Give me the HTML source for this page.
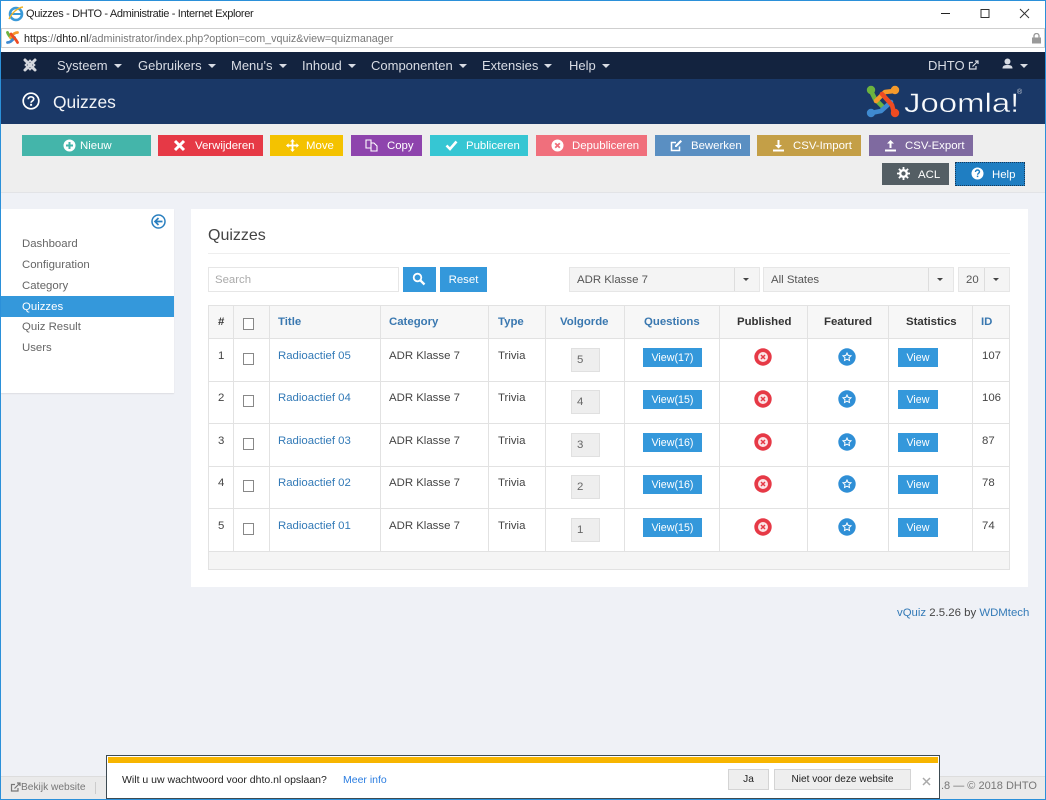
<!DOCTYPE html>
<html><head><meta charset="utf-8"><title>Quizzes - DHTO</title>
<style>
html,body{margin:0;padding:0;width:1046px;height:800px;overflow:hidden;background:#eff1f6;font-family:"Liberation Sans",sans-serif;font-size:11.4px;color:#444}
.a{position:absolute;white-space:nowrap}
.b{position:absolute;box-sizing:border-box;color:#fff;display:block}
.b span{position:absolute;top:1px;white-space:nowrap}
.b svg{position:absolute}
.n{position:absolute;top:52px;line-height:27px;font-size:13px;color:#d8dce4;white-space:nowrap}
.n i{display:inline-block;width:0;height:0;border:4px solid transparent;border-top-color:#d8dce4;border-bottom:0;margin-left:6px;vertical-align:2px}
.h{position:absolute;top:306px;height:33px;line-height:33px;font-weight:bold;color:#3a78b0;white-space:nowrap}
.d{position:absolute;line-height:14px;white-space:nowrap;color:#444}
.l{color:#337ab7}
.v{position:absolute;width:1px;background:#e2e2e2;top:305px;height:246px}
.r{position:absolute;left:208px;width:802px;height:1px;background:#e2e2e2}
.cb{position:absolute;left:243px;width:9px;height:10px;border:1px solid #888;background:#fff}
.ord{position:absolute;left:571px;width:29px;height:24px;box-sizing:border-box;background:#eee;border:1px solid #e0e0e0;line-height:22px;padding-left:5px;color:#666}
.bt{position:absolute;height:19px;line-height:20px;background:#3498db;color:#fff;text-align:center;font-size:10.7px}
.sel{position:absolute;top:267px;height:25px;box-sizing:border-box;background:#f4f4f4;border:1px solid #e6e6e6;line-height:25px;padding-left:7px;color:#555}
.sel b{position:absolute;right:0;top:0;width:24px;height:23px;border-left:1px solid #ddd}
.sel b:after{content:"";position:absolute;left:8px;top:10px;border:3.5px solid transparent;border-top-color:#444;border-bottom:0}
.m{position:absolute;left:22px;color:#666;line-height:21px;margin-top:1px}
</style></head><body>

<!-- window frame -->
<div class="a" style="left:0;top:0;width:1046px;height:28px;background:#fff"></div>
<div class="a" style="left:1px;top:28px;width:1044px;height:20px;box-sizing:border-box;background:#fff;border:1px solid #cfcfcf"></div>
<div class="a" style="left:0;top:48px;width:1046px;height:4px;background:#fff"></div>
<svg class="a" style="left:7px;top:5px" width="18" height="17" viewBox="0 0 18 17"><ellipse cx="9" cy="9" rx="6" ry="6" fill="none" stroke="#3a9ad9" stroke-width="2.600"/><path d="M4 9h10" stroke="#3a9ad9" stroke-width="2"/><path d="M2 14C5 8 10 3 16 2" stroke="#f0b429" stroke-width="1.400" fill="none"/></svg>
<div class="a" style="left:26px;top:7px;font-size:11px;line-height:14px;color:#222;letter-spacing:-.34px">Quizzes - DHTO - Administratie - Internet Explorer</div>
<svg class="a" style="left:940px;top:6px" width="100" height="16" viewBox="0 0 100 16"><path d="M1 7.500h9" stroke="#222" stroke-width="1"/><rect x="41" y="3.500" width="8" height="8" fill="none" stroke="#333"/><path d="M80 3l9 9M89 3l-9 9" stroke="#333" stroke-width="1" fill="none"/></svg>
<svg class="a" style="left:5px;top:30px" width="15" height="15" viewBox="0 0 15 15"><g fill="none" stroke-width="2.800" stroke-linecap="round"><path d="M2.500 2.500c1 3 3 5 5 7" stroke="#6cb33f"/><path d="M12.500 2.500c-3 0-5 2-7 5" stroke="#f59a2b"/><path d="M2.500 12.500c3 0 5-2 7-5" stroke="#3f8ad0"/><path d="M6 4c2 3 5 5 6.500 8.500" stroke="#ee4b22"/></g></svg>
<div class="a" style="left:24px;top:32px;font-size:10.750px;line-height:14px;color:#777"><span style="color:#222">https</span>://<span style="color:#222">dhto.nl</span>/administrator/index.php?option=com_vquiz&amp;view=quizmanager</div>
<svg class="a" style="left:1031px;top:33px" width="11" height="11" viewBox="0 0 11 11"><rect x="1" y="4.500" width="9" height="6" fill="#999"/><path d="M3 5V3a2.500 2.500 0 015 0v2" fill="none" stroke="#999" stroke-width="1.300"/></svg>

<!-- navbar -->
<div class="a" style="left:1px;top:52px;width:1044px;height:27px;background:#13233f"></div>
<svg class="a" style="left:22px;top:57px" width="16" height="16" viewBox="0 0 16 16"><g fill="none" stroke="#d4d7dd" stroke-linecap="round"><path d="M3 3l10 10M13 3L3 13" stroke-width="3"/><path d="M8 3.500L12.500 8 8 12.500 3.500 8z" stroke-width="1.700"/></g></svg>
<div class="n" style="left:57px">Systeem<i></i></div>
<div class="n" style="left:138px">Gebruikers<i></i></div>
<div class="n" style="left:231px">Menu's<i></i></div>
<div class="n" style="left:302px">Inhoud<i></i></div>
<div class="n" style="left:371px">Componenten<i></i></div>
<div class="n" style="left:482px">Extensies<i></i></div>
<div class="n" style="left:569px">Help<i></i></div>
<div class="n" style="left:928px">DHTO</div>
<svg class="a" style="left:968px;top:60px" width="11" height="11" viewBox="0 0 11 11"><path d="M8 6v3H1.500V2.500H5" fill="none" stroke="#d8dce4" stroke-width="1.200"/><path d="M4.500 6.500L9.500 1.500M7 1h3v3" fill="none" stroke="#d8dce4" stroke-width="1.200"/></svg>
<svg class="a" style="left:1002px;top:58px" width="11" height="12" viewBox="0 0 11 12"><circle cx="5.500" cy="3.500" r="3" fill="#d8dce4"/><path d="M0.500 10.500c0-3 2-3.500 5-3.500s5 .5 5 3.500z" fill="#d8dce4"/></svg>
<div class="a" style="left:1020px;top:64px;border:4px solid transparent;border-top-color:#d8dce4;border-bottom:0"></div>

<!-- header -->
<div class="a" style="left:1px;top:79px;width:1044px;height:45px;background:#1a3867"></div>
<svg class="a" style="left:22px;top:92px" width="18" height="18" viewBox="0 0 18 18"><circle cx="9" cy="9" r="7.800" fill="none" stroke="#fff" stroke-width="1.700"/><path d="M6.300 7.200C6.300 5.600 7.500 4.800 9 4.800s2.700.9 2.700 2.200c0 1.900-2.600 1.900-2.600 3.700" fill="none" stroke="#fff" stroke-width="1.700"/><rect x="8.100" y="11.800" width="2" height="2" fill="#fff"/></svg>
<div class="a" style="left:53px;top:91px;font-size:17.400px;line-height:22px;color:#f2f4f7">Quizzes</div>
<svg class="a" style="left:866px;top:85px" width="34" height="33" viewBox="0 0 34 33"><g fill="none" stroke-width="4.600" stroke-linecap="round" stroke-linejoin="round"><path d="M5 6L9 14 17 22" stroke="#6cb33f"/><path d="M28 6L19 7 10 16" stroke="#f59a2b"/><path d="M5 28L15 26 25 17" stroke="#3f8ad0"/><path d="M28 28L26 20 16 9" stroke="#ee4b22"/></g><circle cx="5" cy="5" r="4.200" fill="#6cb33f"/><circle cx="29" cy="5" r="4.200" fill="#f59a2b"/><circle cx="5" cy="28" r="4.200" fill="#3f8ad0"/><circle cx="29" cy="28" r="4.200" fill="#ee4b22"/></svg>
<div class="a" style="left:904px;top:86px;font-size:27px;line-height:34px;color:#f8fafc;-webkit-text-stroke:.4px #1a3867;transform-origin:0 0;transform:scaleX(1.22)">Joomla!</div>
<div class="a" style="left:1017px;top:89px;font-size:7px;line-height:8px;color:#c8ced8">®</div>

<!-- toolbar -->
<div class="a" style="left:1px;top:124px;width:1044px;height:68px;background:#eee;border-bottom:1px solid #e2e3e6"></div>

<a class="b" style="left:22px;top:135px;width:129px;height:21px;background:#44b5aa">
<svg style="left:41px;top:4px" width="13" height="13" viewBox="0 0 13 13"><circle cx="6.500" cy="6.500" r="6" fill="#fff"/><path d="M6.500 3v7M3 6.500h7" stroke="#44b5aa" stroke-width="2"/></svg><span style="left:58px;line-height:21px">Nieuw</span></a>
<a class="b" style="left:158px;top:135px;width:105px;height:21px;background:#e63946">
<svg style="left:15px;top:4px" width="13" height="13" viewBox="0 0 13 13"><path d="M2 2l9 9M11 2l-9 9" stroke="#fff" stroke-width="3"/></svg><span style="left:37px;line-height:21px">Verwijderen</span></a>
<a class="b" style="left:270px;top:135px;width:73px;height:21px;background:#f4c200">
<svg style="left:16px;top:4px" width="13" height="13" viewBox="0 0 13 13"><path d="M6.500 1v11M1 6.500h11" stroke="#fff" stroke-width="1.800"/><path d="M6.500 0l2.300 2.600H4.200zM6.500 13l2.300-2.600H4.200zM0 6.500l2.600-2.300v4.600zM13 6.500l-2.600-2.300v4.600z" fill="#fff"/></svg><span style="left:36px;line-height:21px">Move</span></a>
<a class="b" style="left:351px;top:135px;width:71px;height:21px;background:#8e44ad">
<svg style="left:14px;top:4px" width="14" height="13" viewBox="0 0 14 13"><path d="M1 1h5v8H1zM6 4h3l3 3v5H6V9" fill="none" stroke="#fff" stroke-width="1.100"/></svg><span style="left:36px;line-height:21px">Copy</span></a>
<a class="b" style="left:430px;top:135px;width:98px;height:21px;background:#36c6d3">
<svg style="left:15px;top:5px" width="13" height="11" viewBox="0 0 13 11"><path d="M1.500 5.500l3.500 3.500 6.500-7.500" fill="none" stroke="#fff" stroke-width="2.600"/></svg><span style="left:36px;line-height:21px">Publiceren</span></a>
<a class="b" style="left:536px;top:135px;width:111px;height:21px;background:#f06f7c">
<svg style="left:15px;top:4px" width="13" height="13" viewBox="0 0 13 13"><circle cx="6.500" cy="6.500" r="6" fill="#fff"/><path d="M4.200 4.200l4.600 4.600M8.800 4.200l-4.600 4.600" stroke="#f06f7c" stroke-width="1.800"/></svg><span style="left:36px;line-height:21px">Depubliceren</span></a>
<a class="b" style="left:655px;top:135px;width:95px;height:21px;background:#5a8fc2">
<svg style="left:15px;top:4px" width="13" height="13" viewBox="0 0 13 13"><path d="M9.500 7.500V11.500H1.500V3.500H6" fill="none" stroke="#fff" stroke-width="1.500"/><path d="M5 6.500L10.500 1 12 2.500 6.500 8H5z" fill="#fff"/></svg><span style="left:36px;line-height:21px">Bewerken</span></a>
<a class="b" style="left:757px;top:135px;width:104px;height:21px;background:#c49f47">
<svg style="left:15px;top:4px" width="13" height="13" viewBox="0 0 13 13"><path d="M6.500 1v6" stroke="#fff" stroke-width="2"/><path d="M3 6h7L6.500 9.500z" fill="#fff"/><path d="M1 11.500h11" stroke="#fff" stroke-width="2"/></svg><span style="left:36px;line-height:21px">CSV-Import</span></a>
<a class="b" style="left:869px;top:135px;width:104px;height:21px;background:#7f6aa0">
<svg style="left:15px;top:4px" width="13" height="13" viewBox="0 0 13 13"><path d="M6.500 4v5" stroke="#fff" stroke-width="2"/><path d="M3 4.500h7L6.500 1z" fill="#fff"/><path d="M1 11.500h11" stroke="#fff" stroke-width="2"/></svg><span style="left:36px;line-height:21px">CSV-Export</span></a>
<a class="b" style="left:882px;top:163px;width:67px;height:22px;background:#545e64">
<svg style="left:15px;top:4px" width="13" height="13" viewBox="0 0 13 13"><circle cx="6.500" cy="6.500" r="3.300" fill="none" stroke="#fff" stroke-width="2.300"/><path d="M6.500 0v3M6.500 10v3M0 6.500h3M10 6.500h3M1.900 1.900l2 2M9.100 9.100l2 2M11.100 1.900l-2 2M3.900 9.100l-2 2" stroke="#fff" stroke-width="1.800"/></svg><span style="left:36px;line-height:22px">ACL</span></a>
<a class="b" style="left:955px;top:162px;width:70px;height:24px;background:#1f7ec2;border:1px dotted #14395c">
<svg style="left:15px;top:4px" width="13" height="13" viewBox="0 0 13 13"><circle cx="6.500" cy="6.500" r="6" fill="#fff"/><path d="M4.500 5C4.500 3.700 5.400 3 6.500 3s2 .7 2 1.800c0 1.400-1.900 1.500-1.900 2.900" fill="none" stroke="#1f7ec2" stroke-width="1.400"/><rect x="5.800" y="8.600" width="1.500" height="1.500" fill="#1f7ec2"/></svg><span style="left:36px;line-height:22px">Help</span></a>

<!-- sidebar -->
<div class="a" style="left:1px;top:209px;width:172.500px;height:184px;background:#fff;box-shadow:0 1px 1px #dcdde2"></div>
<svg class="a" style="left:151px;top:214px" width="15" height="15" viewBox="0 0 15 15"><circle cx="7.500" cy="7.500" r="6.500" fill="none" stroke="#2a7fbf" stroke-width="1.500"/><path d="M11.500 7.500H4.500M7.500 4L4 7.500 7.500 11" fill="none" stroke="#2a7fbf" stroke-width="1.700"/></svg>
<div class="m" style="top:233px">Dashboard</div>
<div class="m" style="top:254px">Configuration</div>
<div class="m" style="top:275px">Category</div>
<div class="a" style="left:1px;top:296px;width:173px;height:21px;background:#3498db"></div>
<div class="m" style="top:296px;color:#fff">Quizzes</div>
<div class="m" style="top:316px">Quiz Result</div>
<div class="m" style="top:337px">Users</div>

<!-- main panel -->
<div class="a" style="left:191px;top:209px;width:837px;height:378px;background:#fff"></div>
<div class="a" style="left:208px;top:227px;font-size:16px;line-height:18px;color:#444">Quizzes</div>
<div class="a" style="left:208px;top:253px;width:802px;height:1px;background:#eeeeee"></div>

<div class="a" style="left:208px;top:267px;width:191px;height:25px;box-sizing:border-box;border:1px solid #e6e6e6;line-height:25px;padding-left:6px;color:#aaa">Search</div>
<div class="a" style="left:403px;top:267px;width:33px;height:25px;background:#3498db"></div>
<svg class="a" style="left:412px;top:272px" width="14" height="14" viewBox="0 0 14 14"><circle cx="5.500" cy="5.500" r="3.800" fill="none" stroke="#fff" stroke-width="1.800"/><path d="M8.500 8.500l4 4" stroke="#fff" stroke-width="2.300"/></svg>
<div class="a" style="left:440px;top:267px;width:47px;height:25px;background:#3498db;color:#fff;text-align:center;line-height:27px">Reset</div>

<div class="sel" style="left:569px;width:191px">ADR Klasse 7<b></b></div>
<div class="sel" style="left:763px;width:191px">All States<b></b></div>
<div class="sel" style="left:958px;width:52px">20<b></b></div>

<!-- table -->
<div class="a" style="left:208px;top:305px;width:802px;height:33px;background:#f7f7f7"></div>
<div class="a" style="left:208px;top:551px;width:802px;height:18px;background:#f5f5f5"></div>
<div class="r" style="top:305px"></div><div class="r" style="top:338px"></div><div class="r" style="top:381px"></div><div class="r" style="top:423px"></div><div class="r" style="top:466px"></div><div class="r" style="top:508px"></div><div class="r" style="top:551px"></div><div class="r" style="top:569px"></div>
<div class="v" style="left:208px;height:264px"></div><div class="v" style="left:233px"></div><div class="v" style="left:269px"></div><div class="v" style="left:380px"></div><div class="v" style="left:488px"></div><div class="v" style="left:545px"></div><div class="v" style="left:624px"></div><div class="v" style="left:719px"></div><div class="v" style="left:807px"></div><div class="v" style="left:888px"></div><div class="v" style="left:972px"></div><div class="v" style="left:1009px;height:265px"></div>

<div class="h" style="left:218px;color:#333">#</div>
<div class="cb" style="top:318px"></div>
<div class="h" style="left:278px">Title</div>
<div class="h" style="left:389px">Category</div>
<div class="h" style="left:498px">Type</div>
<div class="h" style="left:560px">Volgorde</div>
<div class="h" style="left:644px">Questions</div>
<div class="h" style="left:737px;color:#333">Published</div>
<div class="h" style="left:824px;color:#333">Featured</div>
<div class="h" style="left:906px;color:#333">Statistics</div>
<div class="h" style="left:981px">ID</div>

<!-- rows -->
<div class="d" style="left:218px;top:349px">1</div><div class="cb" style="top:353px"></div><div class="d l" style="left:278px;top:349px">Radioactief 05</div><div class="d" style="left:389px;top:349px">ADR Klasse 7</div><div class="d" style="left:498px;top:349px">Trivia</div><div class="ord" style="top:348px">5</div><div class="bt" style="left:643px;top:348px;width:59px">View(17)</div>
<svg class="a" style="left:754px;top:348px" width="18" height="18" viewBox="0 0 18 18"><circle cx="9" cy="9" r="8.700" fill="#e63946"/><circle cx="9" cy="9" r="5" fill="#fbe3e5"/><path d="M7 7l4 4M11 7l-4 4" stroke="#e63946" stroke-width="1.500"/></svg>
<svg class="a" style="left:838px;top:348px" width="18" height="18" viewBox="0 0 18 18"><circle cx="9" cy="9" r="8.700" fill="#2f8fd6"/><path d="M9 5l1.200 2.500 2.800.3-2 1.900.5 2.800L9 11.200l-2.500 1.300.5-2.800-2-1.900 2.800-.3z" fill="none" stroke="#fff" stroke-width="1"/></svg>
<div class="bt" style="left:898px;top:348px;width:40px">View</div><div class="d" style="left:982px;top:349px">107</div>

<div class="d" style="left:218px;top:391px">2</div><div class="cb" style="top:395px"></div><div class="d l" style="left:278px;top:391px">Radioactief 04</div><div class="d" style="left:389px;top:391px">ADR Klasse 7</div><div class="d" style="left:498px;top:391px">Trivia</div><div class="ord" style="top:390px">4</div><div class="bt" style="left:643px;top:390px;width:59px">View(15)</div>
<svg class="a" style="left:754px;top:390px" width="18" height="18" viewBox="0 0 18 18"><circle cx="9" cy="9" r="8.700" fill="#e63946"/><circle cx="9" cy="9" r="5" fill="#fbe3e5"/><path d="M7 7l4 4M11 7l-4 4" stroke="#e63946" stroke-width="1.500"/></svg>
<svg class="a" style="left:838px;top:390px" width="18" height="18" viewBox="0 0 18 18"><circle cx="9" cy="9" r="8.700" fill="#2f8fd6"/><path d="M9 5l1.200 2.500 2.800.3-2 1.900.5 2.800L9 11.200l-2.500 1.300.5-2.800-2-1.900 2.800-.3z" fill="none" stroke="#fff" stroke-width="1"/></svg>
<div class="bt" style="left:898px;top:390px;width:40px">View</div><div class="d" style="left:982px;top:391px">106</div>

<div class="d" style="left:218px;top:434px">3</div><div class="cb" style="top:438px"></div><div class="d l" style="left:278px;top:434px">Radioactief 03</div><div class="d" style="left:389px;top:434px">ADR Klasse 7</div><div class="d" style="left:498px;top:434px">Trivia</div><div class="ord" style="top:433px">3</div><div class="bt" style="left:643px;top:433px;width:59px">View(16)</div>
<svg class="a" style="left:754px;top:433px" width="18" height="18" viewBox="0 0 18 18"><circle cx="9" cy="9" r="8.700" fill="#e63946"/><circle cx="9" cy="9" r="5" fill="#fbe3e5"/><path d="M7 7l4 4M11 7l-4 4" stroke="#e63946" stroke-width="1.500"/></svg>
<svg class="a" style="left:838px;top:433px" width="18" height="18" viewBox="0 0 18 18"><circle cx="9" cy="9" r="8.700" fill="#2f8fd6"/><path d="M9 5l1.200 2.500 2.800.3-2 1.900.5 2.800L9 11.200l-2.500 1.300.5-2.800-2-1.900 2.800-.3z" fill="none" stroke="#fff" stroke-width="1"/></svg>
<div class="bt" style="left:898px;top:433px;width:40px">View</div><div class="d" style="left:982px;top:434px">87</div>

<div class="d" style="left:218px;top:476px">4</div><div class="cb" style="top:480px"></div><div class="d l" style="left:278px;top:476px">Radioactief 02</div><div class="d" style="left:389px;top:476px">ADR Klasse 7</div><div class="d" style="left:498px;top:476px">Trivia</div><div class="ord" style="top:475px">2</div><div class="bt" style="left:643px;top:475px;width:59px">View(16)</div>
<svg class="a" style="left:754px;top:475px" width="18" height="18" viewBox="0 0 18 18"><circle cx="9" cy="9" r="8.700" fill="#e63946"/><circle cx="9" cy="9" r="5" fill="#fbe3e5"/><path d="M7 7l4 4M11 7l-4 4" stroke="#e63946" stroke-width="1.500"/></svg>
<svg class="a" style="left:838px;top:475px" width="18" height="18" viewBox="0 0 18 18"><circle cx="9" cy="9" r="8.700" fill="#2f8fd6"/><path d="M9 5l1.200 2.500 2.800.3-2 1.900.5 2.800L9 11.200l-2.500 1.300.5-2.800-2-1.900 2.800-.3z" fill="none" stroke="#fff" stroke-width="1"/></svg>
<div class="bt" style="left:898px;top:475px;width:40px">View</div><div class="d" style="left:982px;top:476px">78</div>

<div class="d" style="left:218px;top:519px">5</div><div class="cb" style="top:523px"></div><div class="d l" style="left:278px;top:519px">Radioactief 01</div><div class="d" style="left:389px;top:519px">ADR Klasse 7</div><div class="d" style="left:498px;top:519px">Trivia</div><div class="ord" style="top:518px">1</div><div class="bt" style="left:643px;top:518px;width:59px">View(15)</div>
<svg class="a" style="left:754px;top:518px" width="18" height="18" viewBox="0 0 18 18"><circle cx="9" cy="9" r="8.700" fill="#e63946"/><circle cx="9" cy="9" r="5" fill="#fbe3e5"/><path d="M7 7l4 4M11 7l-4 4" stroke="#e63946" stroke-width="1.500"/></svg>
<svg class="a" style="left:838px;top:518px" width="18" height="18" viewBox="0 0 18 18"><circle cx="9" cy="9" r="8.700" fill="#2f8fd6"/><path d="M9 5l1.200 2.500 2.800.3-2 1.900.5 2.800L9 11.200l-2.500 1.300.5-2.800-2-1.900 2.800-.3z" fill="none" stroke="#fff" stroke-width="1"/></svg>
<div class="bt" style="left:898px;top:518px;width:40px">View</div><div class="d" style="left:982px;top:519px">74</div>

<div class="a" style="left:897px;top:606px;line-height:14px;color:#444"><span class="l">vQuiz</span> 2.5.26 by <span class="l">WDMtech</span></div>

<!-- status bar -->
<div class="a" style="left:1px;top:776px;width:1044px;height:23px;background:#eaeaea;border-top:1px solid #ddd;box-sizing:border-box"></div>
<svg class="a" style="left:10px;top:782px" width="11" height="11" viewBox="0 0 11 11"><path d="M8 6v3H1.500V2.500H5" fill="none" stroke="#777" stroke-width="1.200"/><path d="M4.500 6.500L9.500 1.500M7 1h3v3" fill="none" stroke="#777" stroke-width="1.200"/></svg>
<div class="a" style="left:21px;top:781px;font-size:10.200px;line-height:13px;color:#777">Bekijk website</div>
<div class="a" style="left:95px;top:782px;width:1px;height:12px;background:#ccc"></div>
<div class="a" style="left:941px;top:780px;font-size:11px;line-height:13px;color:#777">.8 — © 2018 DHTO</div>

<!-- IE notification -->
<div class="a" style="left:106px;top:755px;width:834px;height:44px;box-sizing:border-box;background:#fff;border:1px solid #3c4a52"></div>
<div class="a" style="left:108px;top:757px;width:830px;height:6px;background:#f7b500"></div>
<div class="a" style="left:122px;top:773px;font-size:10.500px;line-height:14px;color:#222">Wilt u uw wachtwoord voor dhto.nl opslaan?</div>
<div class="a" style="left:343px;top:773px;font-size:10.500px;line-height:14px;color:#2b7de0">Meer info</div>
<div class="a" style="left:728px;top:769px;width:41px;height:21px;box-sizing:border-box;background:#eee;border:1px solid #d4d4d4;text-align:center;font-size:10.100px;line-height:19px;color:#222">Ja</div>
<div class="a" style="left:774px;top:769px;width:137px;height:21px;box-sizing:border-box;background:#eee;border:1px solid #d4d4d4;text-align:center;font-size:10.100px;line-height:19px;color:#222">Niet voor deze website</div>
<svg class="a" style="left:922px;top:777px" width="9" height="9" viewBox="0 0 9 9"><path d="M1 1l7 7M8 1L1 8" stroke="#aaa" stroke-width="1.500"/></svg>

<!-- blue window border -->
<div class="a" style="left:0;top:0;width:1046px;height:800px;box-sizing:border-box;border:1px solid #2b90d9;pointer-events:none"></div>
</body></html>
